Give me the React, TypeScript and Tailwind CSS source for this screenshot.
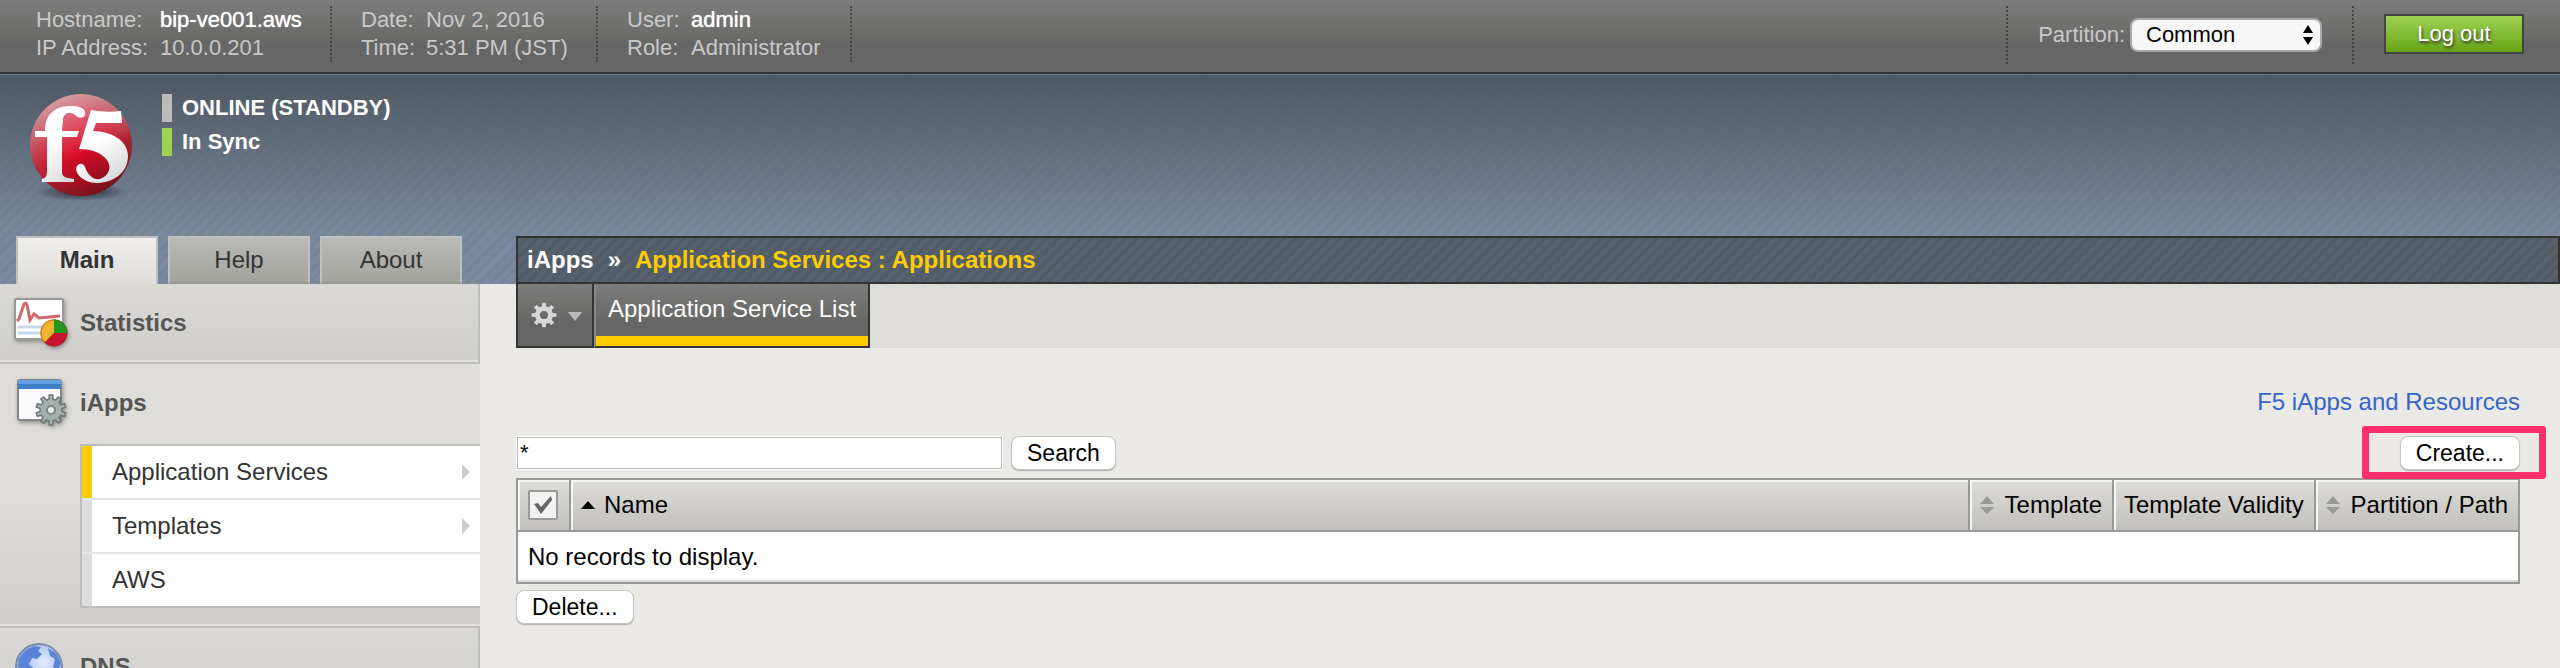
import type { ReactNode } from "react";

const bar = "bg-linear-to-b from-[#7d7d7d] from-0% via-[#686866] via-57% to-[#666666] to-58%";
const stripes =
  "bg-[repeating-linear-gradient(135deg,rgba(255,255,255,0.035)_0px,rgba(255,255,255,0.035)_4px,transparent_5px,transparent_8px)]";
const pushButton =
  "h-[34px] rounded-lg border border-[#c4c4c2] bg-white px-[15px] text-[23px] leading-[30px] text-black shadow-[0_1px_1px_#b0b0ae]";

function InfoGroup({ rows, labelWidth, className }: { rows: [string, string, boolean][]; labelWidth: string; className: string }) {
  return (
    <dl className={`flex h-14 flex-col border-r-2 border-dotted border-[#444] text-[22px] leading-7 text-[#c9c9c9] ${className}`}>
      {rows.map(([label, value, strong]) => (
        <div key={label} className="flex whitespace-nowrap">
          <dt className={labelWidth}>{label}</dt>
          <dd className={strong ? "text-white [text-shadow:0_0_1px_#fff]" : ""}>{value}</dd>
        </div>
      ))}
    </dl>
  );
}

function Logo() {
  return (
    <svg viewBox="0 0 102 110" className="h-[110px] w-[102px]" aria-label="f5" role="img">
      <defs>
        <radialGradient id="ball" cx="0.5" cy="0.55" r="0.55">
          <stop offset="0" stopColor="#dc0a26" />
          <stop offset="0.6" stopColor="#cf1530" />
          <stop offset="1" stopColor="#a5343d" />
        </radialGradient>
        <linearGradient id="gloss" x1="0.3" y1="0" x2="0.5" y2="0.6">
          <stop offset="0" stopColor="#fff" stopOpacity="0.55" />
          <stop offset="1" stopColor="#fff" stopOpacity="0" />
        </linearGradient>
        <linearGradient id="shade" x1="0.4" y1="0.6" x2="0.6" y2="1">
          <stop offset="0" stopColor="#400" stopOpacity="0" />
          <stop offset="1" stopColor="#300" stopOpacity="0.5" />
        </linearGradient>
        <linearGradient id="mark" x1="0" y1="0" x2="0.6" y2="1">
          <stop offset="0.5" stopColor="#fff" />
          <stop offset="1" stopColor="#d9dcde" />
        </linearGradient>
        <radialGradient id="drop">
          <stop offset="0" stopColor="#1c222a" stopOpacity="0.9" />
          <stop offset="1" stopColor="#1c222a" stopOpacity="0" />
        </radialGradient>
      </defs>
      <ellipse cx="52" cy="98" rx="46" ry="9" fill="url(#drop)" />
      <circle cx="51" cy="51" r="51" fill="url(#ball)" />
      <circle cx="51" cy="51" r="51" fill="url(#gloss)" />
      <circle cx="51" cy="51" r="51" fill="url(#shade)" />
      <path
        fill="url(#mark)"
        d="M5 37H15C15 20 25 12 41 12C50 12 57 15 55 21C53 25 48 24 45 21C41 17 34 18 33 25L32 37H49L47 43H32V78C32 83 36 84 44 85V88H12V85C16 84 17 82 17 77V43H5Z"
      />
      <path
        fill="url(#mark)"
        d="M61 16C71 18 82 18 91 17L92 29H66L63 37C86 38 98 49 98 62C98 79 83 89 66 89C54 88 47 82 46 75C47 69 53 68 55 73C58 82 64 86 70 85C79 82 82 73 77 66C71 58 60 55 49 55Z"
      />
    </svg>
  );
}

function gearPath(cx: number, cy: number, outer: number, inner: number, teeth: number) {
  const step = (Math.PI * 2) / teeth;
  const points: string[] = [];
  for (let i = 0; i < teeth; i++) {
    const a = i * step - Math.PI / 2;
    [
      [inner, -0.3],
      [outer, -0.19],
      [outer, 0.19],
      [inner, 0.3],
    ].forEach(([r, k]) => points.push(`${(cx + r * Math.cos(a + k * step)).toFixed(2)} ${(cy + r * Math.sin(a + k * step)).toFixed(2)}`));
  }
  return `M${points.join("L")}Z`;
}

function StatisticsIcon() {
  return (
    <svg viewBox="0 0 60 56" className="h-14 w-[60px] drop-shadow-[1px_2px_2px_rgba(0,0,0,0.35)]" aria-hidden="true">
      <rect x="3" y="4" width="48" height="40" rx="1" fill="#fff" stroke="#999" strokeWidth="2" />
      <path d="M6 32H46M6 38H46" stroke="#c3d8e8" strokeWidth="3" />
      <path d="M5 26L7 24L12 9Q14 7 15 10L18 25L22 19L27 23L48 21" fill="none" stroke="#d4656b" strokeWidth="3" />
      <circle cx="42" cy="38" r="13.5" fill="#c8152f" />
      <path d="M42 38V24.500A13.500 13.500 0 0 1 55.500 38Z" fill="#239a1f" />
      <path d="M42 38V24.500A13.500 13.500 0 0 0 32.500 47.500Z" fill="#eeb62d" />
      <circle cx="42" cy="38" r="13" fill="none" stroke="#7a3a20" strokeOpacity="0.45" />
    </svg>
  );
}

function IAppsIcon() {
  return (
    <svg viewBox="0 0 60 56" className="h-14 w-[60px] drop-shadow-[1px_2px_2px_rgba(0,0,0,0.35)]" aria-hidden="true">
      <rect x="6" y="5" width="43" height="40" rx="2" fill="#fafafc" stroke="#858585" strokeWidth="2" />
      <path d="M6 5H49V14H6Z" fill="#3d80c8" />
      <path d="M6 5H49V9H6Z" fill="#62a2e4" />
      <path d={gearPath(39, 35, 15, 11, 10)} fill="#a5b0ae" stroke="#6f7775" strokeWidth="1.5" />
      <circle cx="39" cy="35" r="4" fill="#eceef0" stroke="#7b8482" strokeWidth="2" />
    </svg>
  );
}

function GlobeIcon() {
  return (
    <svg viewBox="0 0 60 56" className="h-14 w-[60px]" aria-hidden="true">
      <defs>
        <radialGradient id="sea" cx="0.6" cy="0.4" r="0.6">
          <stop offset="0" stopColor="#e4ecfb" />
          <stop offset="1" stopColor="#93b0ea" />
        </radialGradient>
      </defs>
      <circle cx="27" cy="28" r="23" fill="url(#sea)" stroke="#7c8ca8" strokeWidth="2" />
      <path d="M7 20Q12 10 22 7L29 8L26 12L30 15L25 20L20 19L17 25L22 30L18 34L10 30L6 28ZM36 9L44 14L49 24L46 32L41 28L43 20L38 17Z" fill="#5c83d6" />
    </svg>
  );
}

function NavItem({ icon, label, className, children }: { icon: ReactNode; label: string; className: string; children?: ReactNode }) {
  return (
    <li className={`border-b-2 border-[#bdbdbb] ${className}`}>
      <a href="#" className="flex h-[78px] items-center gap-2 pl-3 text-2xl font-bold text-[#555]">
        {icon}
        {label}
      </a>
      {children}
    </li>
  );
}

function SubItem({ label, active, arrow }: { label: string; active?: boolean; arrow?: boolean }) {
  return (
    <li className="border-b-2 border-[#e4e4e4] last:border-b-0">
      <a
        href="#"
        className={`flex h-[52px] items-center justify-between border-l-10 bg-white pr-[10px] pl-5 text-2xl text-[#333] ${active ? "border-[#fc0]" : "border-[#dcdcdc]"}`}
      >
        {label}
        {arrow && (
          <svg viewBox="0 0 8 16" className="h-4 w-2" aria-hidden="true">
            <path d="M0 0L8 8L0 16Z" fill="#ccc" />
          </svg>
        )}
      </a>
    </li>
  );
}

function SortIcon() {
  return (
    <svg viewBox="0 0 14 20" className="h-5 w-[14px] shrink-0" aria-hidden="true">
      <path d="M7 1L14 9H0ZM0 12H14L7 19Z" fill="#999" />
    </svg>
  );
}

const headCell =
  "h-[52px] border-2 border-[#999] bg-linear-to-b from-[#dddcd9] to-[#c1c0bc] p-0 text-left font-normal shadow-[inset_2px_2px_0_#f4f4f2]";

export default function App() {
  return (
    <div className="flex h-screen flex-col overflow-hidden bg-[#eae9e5] font-['Liberation_Sans',Arial,sans-serif] text-2xl text-black">
      <header className={`flex items-start justify-between border-b-2 border-[#333] pt-[6px] pb-[10px] ${bar}`}>
        <div className="flex">
          <InfoGroup className="w-[332px] pl-9" labelWidth="w-[124px]" rows={[["Hostname:", "bip-ve001.aws", true], ["IP Address:", "10.0.0.201", false]]} />
          <InfoGroup className="w-[266px] pl-[29px]" labelWidth="w-[65px]" rows={[["Date:", "Nov 2, 2016", false], ["Time:", "5:31 PM (JST)", false]]} />
          <InfoGroup className="w-[254px] pl-[29px]" labelWidth="w-[64px]" rows={[["User:", "admin", true], ["Role:", "Administrator", false]]} />
        </div>
        <div className="-mb-1 flex pr-9">
          <div className="flex h-[58px] items-center gap-[5px] border-x-2 border-dotted border-[#444] pr-[30px] pl-[30px]">
            <label htmlFor="partition" className="text-[22px] text-[#c9c9c9]">
              Partition:
            </label>
            <div className="relative">
              <select
                id="partition"
                className="block h-[34px] w-[192px] appearance-none rounded-lg border-2 border-[#a8a8a8] bg-[#f7f7f7] pl-[14px] text-[22px] leading-7 text-black"
              >
                <option>Common</option>
              </select>
              <svg viewBox="0 0 10 20" className="pointer-events-none absolute top-[7px] right-[9px] h-5 w-[10px]" aria-hidden="true">
                <path d="M5 0L10 8H0ZM0 12H10L5 20Z" />
              </svg>
            </div>
          </div>
          <button
            type="button"
            className="mt-2 ml-[30px] h-10 w-[140px] border-2 border-[#444] bg-linear-to-b from-[#a0d252] to-[#66a30f] text-[22px] text-white [text-shadow:1px_2px_3px_#333]"
          >
            Log out
          </button>
        </div>
      </header>

      <div className={`flex h-[210px] shrink-0 flex-col justify-between bg-[#76869a] ${stripes}`}>
        <div className="flex grow border-t border-[#6a7887] bg-linear-to-b from-[#4e5863] to-transparent pt-[19px] pl-[30px]">
          <Logo />
          <ul className="ml-[30px] flex flex-col gap-[6px] text-[22px] leading-7 font-bold text-white">
            <li className="border-l-10 border-[#bbb] pl-[10px]">ONLINE (STANDBY)</li>
            <li className="border-l-10 border-[#a0d252] pl-[10px]">In Sync</li>
          </ul>
        </div>
        <div className="flex">
          <nav className="flex w-[516px] shrink-0 gap-[10px] pl-4">
            <button type="button" className="h-12 w-[142px] border-2 border-b-0 border-[#c0c0be] bg-linear-to-b from-[#efeeed] to-[#deddd9] pb-[2px] font-bold text-[#333]">
              Main
            </button>
            <button type="button" className="h-12 w-[142px] border-2 border-[#c0c0be] border-b-[#989894] bg-linear-to-b from-[#b9b9b5] to-[#a3a39e] text-[#333]">
              Help
            </button>
            <button type="button" className="h-12 w-[142px] border-2 border-[#c0c0be] border-b-[#989894] bg-linear-to-b from-[#b9b9b5] to-[#a3a39e] text-[#333]">
              About
            </button>
          </nav>
          <h1 className={`flex h-12 grow items-center border-2 border-[#333] bg-[#505b67] pl-[9px] font-bold text-white ${stripes}`}>
            <span>iApps</span>
            <span className="mx-[14px]">»</span>
            <span className="text-[#fc0]">Application Services : Applications</span>
          </h1>
        </div>
      </div>

      <div className="flex grow">
        <ul className="w-[480px] shrink-0 self-start">
          <NavItem
            icon={<StatisticsIcon />}
            label="Statistics"
            className="border-r-2 bg-linear-to-b from-[#dad9d5] to-[#cfceca] shadow-[inset_0_-2px_0_#e2e1de]"
          />
          <NavItem
            icon={<IAppsIcon />}
            label="iApps"
            className="bg-linear-to-b from-[#deddd9] from-50% to-[#cfceca] pb-[18px] shadow-[inset_0_-2px_0_#e2e1de]"
          >
            <ul className="mt-[2px] ml-20 border-2 border-r-0 border-[#bdbdbb]">
              <SubItem label="Application Services" active arrow />
              <SubItem label="Templates" arrow />
              <SubItem label="AWS" />
            </ul>
          </NavItem>
          <NavItem icon={<GlobeIcon />} label="DNS" className="border-r-2 bg-linear-to-b from-[#dad9d5] to-[#cfceca]" />
        </ul>

        <main className="ml-9 grow">
          <div className="flex h-16 bg-[#deddd9]">
            <button type="button" aria-label="Options" className={`flex w-[78px] items-center justify-between border-2 border-t-0 border-[#333] pr-[10px] pl-[13px] ${bar}`}>
              <svg viewBox="0 0 26 26" className="h-[26px] w-[26px]" aria-hidden="true">
                <path fillRule="evenodd" d={`${gearPath(13, 13, 12.5, 9, 8)}M13 9A4 4 0 1 0 13 17A4 4 0 1 0 13 9Z`} fill="#d6d6d6" />
              </svg>
              <svg viewBox="0 0 14 10" className="mt-1 h-[10px] w-[14px]" aria-hidden="true">
                <path d="M0 0H14L7 9Z" fill="#bbb" />
              </svg>
            </button>
            <a href="#" className={`border-r-2 border-b-2 border-l-2 border-[#333] border-l-[#888] text-white ${bar}`}>
              <span className="flex h-[62px] border-b-10 border-[#fc0] px-3 pt-[9px] leading-8">Application Service List</span>
            </a>
          </div>

          <div className="flex flex-col items-end pt-[38px] pr-10">
            <a href="#" className="leading-8 text-[#36c]">
              F5 iApps and Resources
            </a>
            <div className="mt-[18px] flex w-full justify-between">
              <form className="flex gap-2" onSubmit={(e) => e.preventDefault()}>
                <input
                  type="text"
                  aria-label="Filter"
                  defaultValue="*"
                  className="h-[34px] w-[487px] border border-white bg-white px-[3px] text-[22px] leading-7 shadow-[inset_0_0_0_1px_#bbb]"
                />
                <button type="submit" className={pushButton}>
                  Search
                </button>
              </form>
              <div className="relative">
                <button type="button" className={pushButton}>
                  Create...
                </button>
                <div className="pointer-events-none absolute -top-[10px] -right-[26px] h-[53px] w-[184px] rounded-[3px] border-7 border-[#ff2e6c]" />
              </div>
            </div>
            <table className="mt-2 w-full border-collapse">
              <thead>
                <tr>
                  <th className={`${headCell} w-[53px]`}>
                    <label className="ml-[10px] flex h-[30px] w-[30px] items-center justify-center rounded-[2px] border-2 border-[#999] bg-[#f2f2f1]">
                      <input type="checkbox" aria-label="Select all" className="absolute h-7 w-7 appearance-none" />
                      <svg viewBox="0 0 20 20" className="h-5 w-5" aria-hidden="true">
                        <path d="M1 9L5 8L8 12L18 1L19 5L8 19Z" fill="#666" />
                      </svg>
                    </label>
                  </th>
                  <th className={headCell}>
                    <span className="flex items-center gap-[9px] pl-[10px]">
                      <svg viewBox="0 0 14 8" className="h-2 w-[14px]" aria-hidden="true">
                        <path d="M7 0L14 8H0Z" />
                      </svg>
                      Name
                    </span>
                  </th>
                  <th className={`${headCell} w-[144px]`}>
                    <span className="flex items-center justify-between pr-[10px] pl-[10px]">
                      <SortIcon />
                      Template
                    </span>
                  </th>
                  <th className={`${headCell} w-[202px]`}>
                    <span className="block pl-[10px] whitespace-nowrap">Template Validity</span>
                  </th>
                  <th className={`${headCell} w-[204px]`}>
                    <span className="flex items-center justify-between pr-[10px] pl-[10px] whitespace-nowrap">
                      <SortIcon />
                      Partition / Path
                    </span>
                  </th>
                </tr>
              </thead>
              <tbody>
                <tr>
                  <td colSpan={5} className="h-[52px] border-2 border-[#999] bg-white py-0 pl-[10px] shadow-[inset_0_-2px_0_#ddd]">
                    No records to display.
                  </td>
                </tr>
              </tbody>
            </table>
            <button type="button" className={`${pushButton} mt-[6px] self-start`}>
              Delete...
            </button>
          </div>
        </main>
      </div>
    </div>
  );
}
